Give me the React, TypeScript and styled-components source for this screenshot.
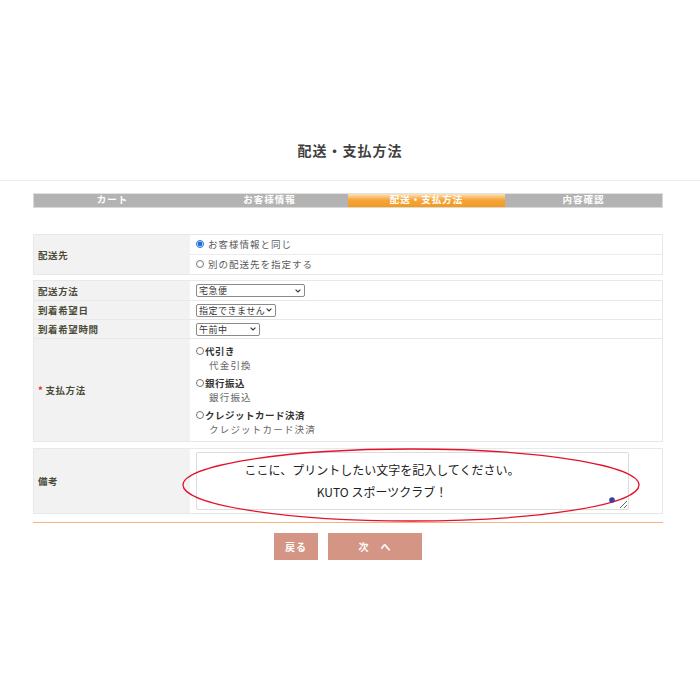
import React from "react";
import styled, { createGlobalStyle } from "styled-components";

const Global = createGlobalStyle`
  html, body { margin: 0; padding: 0; background: #fff; }
  body { font-family: "Noto Sans CJK JP", "Noto Sans", sans-serif; width: 700px; }
  * { box-sizing: border-box; }
`;

const Header = styled.header`
  height: 181px;
  border-bottom: 1px solid #ececec;
  padding-top: 140px;
  text-align: center;
`;

const Title = styled.h1`
  margin: 0;
  font-size: 14px;
  line-height: 20px;
  font-weight: 700;
  color: #3f3f3f;
  letter-spacing: 1px;
`;

const Main = styled.main`
  padding: 0 37px 0 33px;
`;

const Steps = styled.div`
  margin-top: 12px;
  display: grid;
  grid-template-columns: repeat(4, 1fr);
  height: 15px;
  border: 1px solid #d9d9d9;
  border-top-color: #e2e2e2;
`;

const Step = styled.div<{ $active?: boolean }>`
  background: ${(p) =>
    p.$active ? "linear-gradient(#fde2b8 0%, #f5a63a 45%, #f39a1f 100%)" : "#b3b3b3"};
  color: #fff;
  font-size: 9.5px;
  font-weight: 700;
  line-height: 11px;
  text-align: center;
  letter-spacing: 1px;
`;

const Table = styled.div<{ $gap: number }>`
  position: relative;
  margin-top: ${(p) => p.$gap}px;
  border: 1px solid #e8e8e8;
`;

const Row = styled.div<{ $h: number }>`
  display: grid;
  grid-template-columns: 156px 1fr;
  min-height: ${(p) => p.$h}px;
  & + & { border-top: 1px solid #e8e8e8; }
`;

const Label = styled.div`
  background: #f2f2f2;
  display: flex;
  align-items: center;
  padding-left: 4px;
  font-size: 9.5px;
  font-weight: 700;
  color: #4a4a38;
  letter-spacing: 0.6px;
`;

const Req = styled.span`
  color: #e03030;
  margin-right: 2px;
`;

const Value = styled.div`
  display: flex;
  flex-direction: column;
  justify-content: center;
  align-items: flex-start;
  padding-left: 6px;
`;

const SubRow = styled.label`
  align-self: stretch;
  height: 19px;
  display: flex;
  align-items: center;
  padding-bottom: 2px;
  font-size: 9.5px;
  color: #5a5a5a;
  letter-spacing: 1px;
  margin-left: -6px;
  padding-left: 6px;
  & + & { border-top: 1px solid #ececec; height: 20px; }
`;

const Radio = styled.input.attrs({ type: "radio" })`
  width: 8px;
  height: 8px;
  margin: 0 4px 0 0;
  accent-color: #1a6fd8;
`;

const SelectWrap = styled.div`
  position: relative;
  display: inline-flex;
`;

const Select = styled.select<{ $w: number }>`
  appearance: none;
  -webkit-appearance: none;
  width: ${(p) => p.$w}px;
  height: 13px;
  padding: 0 9px 0 2px;
  margin: 0;
  font-family: inherit;
  font-size: 9px;
  line-height: 11px;
  letter-spacing: 0.5px;
  color: #333;
  border: 1px solid #8a8a8a;
  border-radius: 2px;
  background: #fff;
  overflow: hidden;
`;

const Chevron = styled.svg`
  position: absolute;
  right: 4px;
  top: 4.5px;
  pointer-events: none;
`;

const PayList = styled.div`
  padding: 4px 0 5px;
  display: flex;
  flex-direction: column;
  gap: 4px;
`;

const PayOption = styled.div`
  display: flex;
  flex-direction: column;
`;

const PayTitle = styled.label`
  display: flex;
  align-items: center;
  font-size: 9.5px;
  line-height: 14px;
  font-weight: 700;
  color: #333;
  letter-spacing: 0.5px;
`;

const PayRadio = styled.input.attrs({ type: "radio" })`
  width: 8px;
  height: 8px;
  margin: 0 1px 0 0;
`;

const PaySub = styled.div`
  padding-left: 13px;
  font-size: 9.5px;
  line-height: 14px;
  color: #666;
  letter-spacing: 1.2px;
`;

const NoteValue = styled.div`
  padding: 3px 0 3px 6px;
`;

const TextArea = styled.textarea`
  display: block;
  width: 433px;
  height: 58px;
  border: 1px solid #dcdcdc;
  border-radius: 2px;
  resize: both;
  font-family: inherit;
`;

const Overlay = styled.svg`
  position: absolute;
  left: 0;
  top: -6px;
  pointer-events: none;
  overflow: visible;
`;

const OverlayText = styled.div`
  position: absolute;
  left: 198px;
  width: 300px;
  top: 10px;
  text-align: center;
  font-size: 12px;
  line-height: 22px;
  color: #222;
  pointer-events: none;
`;

const Divider = styled.div`
  margin-top: 8px;
  height: 1px;
  background: #f6b27e;
`;

const Buttons = styled.div`
  margin-top: 10px;
  display: flex;
  justify-content: center;
  gap: 10px;
`;

const Btn = styled.button<{ $w: number }>`
  width: ${(p) => p.$w}px;
  height: 27px;
  border: none;
  background: #d49585;
  color: #fff;
  font-family: inherit;
  font-size: 10px;
  font-weight: 700;
  letter-spacing: 1px;
  padding: 0;
`;

function Dropdown({ w, value }: { w: number; value: string }) {
  return (
    <SelectWrap>
      <Select $w={w} defaultValue={value}>
        <option>{value}</option>
      </Select>
      <Chevron width="6" height="4" viewBox="0 0 6 4">
        <path d="M0.6 0.6 L3 3 L5.4 0.6" fill="none" stroke="#333" strokeWidth="1.1" />
      </Chevron>
    </SelectWrap>
  );
}

export default function App() {
  return (
    <>
      <Global />
      <Header>
        <Title>配送・支払方法</Title>
      </Header>
      <Main>
        <Steps>
          <Step>カート</Step>
          <Step>お客様情報</Step>
          <Step $active>配送・支払方法</Step>
          <Step>内容確認</Step>
        </Steps>

        <Table $gap={26}>
          <Row $h={39}>
            <Label>配送先</Label>
            <Value>
              <SubRow>
                <Radio name="dest" defaultChecked />
                お客様情報と同じ
              </SubRow>
              <SubRow>
                <Radio name="dest" />
                別の配送先を指定する
              </SubRow>
            </Value>
          </Row>
        </Table>

        <Table $gap={5}>
          <Row $h={19}>
            <Label>配送方法</Label>
            <Value>
              <Dropdown w={109} value="宅急便" />
            </Value>
          </Row>
          <Row $h={19}>
            <Label>到着希望日</Label>
            <Value>
              <Dropdown w={80} value="指定できません" />
            </Value>
          </Row>
          <Row $h={19}>
            <Label>到着希望時間</Label>
            <Value>
              <Dropdown w={64} value="午前中" />
            </Value>
          </Row>
          <Row $h={103}>
            <Label>
              <Req>*</Req>支払方法
            </Label>
            <Value>
              <PayList>
                <PayOption>
                  <PayTitle>
                    <PayRadio name="pay" />
                    代引き
                  </PayTitle>
                  <PaySub>代金引換</PaySub>
                </PayOption>
                <PayOption>
                  <PayTitle>
                    <PayRadio name="pay" />
                    銀行振込
                  </PayTitle>
                  <PaySub>銀行振込</PaySub>
                </PayOption>
                <PayOption>
                  <PayTitle>
                    <PayRadio name="pay" />
                    クレジットカード決済
                  </PayTitle>
                  <PaySub>クレジットカード決済</PaySub>
                </PayOption>
              </PayList>
            </Value>
          </Row>
        </Table>

        <Table $gap={6}>
          <Row $h={64}>
            <Label>備考</Label>
            <NoteValue>
              <TextArea />
            </NoteValue>
          </Row>
          <Overlay width="630" height="80" viewBox="0 0 630 80">
            <ellipse cx="377" cy="42" rx="228" ry="36" fill="none" stroke="#e3132c" strokeWidth="1.3" />
            <circle cx="578" cy="57" r="2.8" fill="#3b3f9e" />
          </Overlay>
          <OverlayText>
            ここに、プリントしたい文字を記入してください。
            <br />
            KUTO スポーツクラブ！
          </OverlayText>
        </Table>

        <Divider />
        <Buttons>
          <Btn $w={44}>戻る</Btn>
          <Btn $w={94}>次　へ</Btn>
        </Buttons>
      </Main>
    </>
  );
}
